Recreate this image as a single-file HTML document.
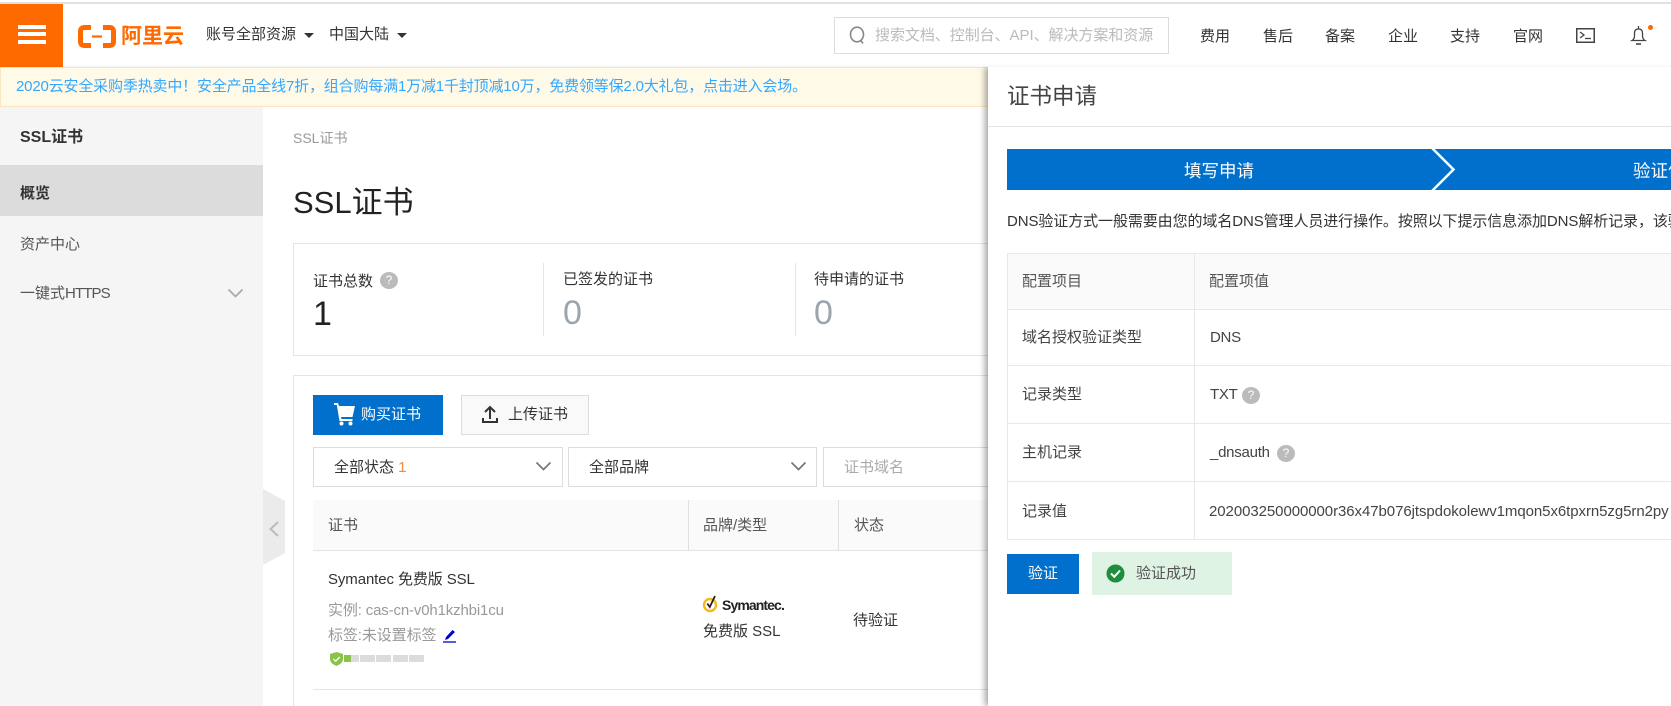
<!DOCTYPE html>
<html lang="zh-CN"><head><meta charset="utf-8"><title>SSL证书</title>
<style>
html,body{margin:0;padding:0;background:#fff;width:1671px;height:706px;overflow:hidden}
body{position:relative;font-family:"Liberation Sans","Noto Sans CJK SC",sans-serif;font-size:15px;color:#333}
.a{position:absolute;box-sizing:border-box}
.t{position:absolute;white-space:nowrap;line-height:20px;height:20px}
.help{position:absolute;width:18px;height:17px;border-radius:50%;background:#bbb;color:#fff;font-size:12px;line-height:17px;text-align:center}
svg{position:absolute;overflow:visible}
</style></head><body>

<!-- top bar -->
<div class="a" style="left:0;top:2px;width:1671px;height:2px;background:#e0e0e8"></div>
<div class="a" style="left:0;top:4px;width:63px;height:63px;background:#ff6a00"></div>
<div class="a" style="left:18px;top:25px;width:28px;height:4px;background:#fff"></div>
<div class="a" style="left:18px;top:32px;width:28px;height:4px;background:#fff"></div>
<div class="a" style="left:18px;top:40px;width:28px;height:4px;background:#fff"></div>
<svg style="left:78px;top:25px" width="38" height="23" viewBox="0 0 38 23" fill="none" stroke="#ff6a00"><path d="M13 2.5H6.5Q2.5 2.5 2.5 6.5V16.5Q2.5 20.5 6.5 20.5H13" stroke-width="5"/><path d="M25 2.5H31.5Q35.5 2.5 35.5 6.5V16.5Q35.5 20.5 31.5 20.5H25" stroke-width="5"/><path d="M14 11.5H24" stroke-width="2.2"/></svg>
<div class="t" style="left:121px;top:26px;font-size:21px;line-height:22px;height:22px;font-weight:700;color:#ff6a00;letter-spacing:0">阿里云</div>
<div class="t" style="left:206px;top:25px;color:#333">账号全部资源</div>
<svg style="left:304px;top:33px" width="10" height="5"><path d="M0 0H10L5 5Z" fill="#333"/></svg>
<div class="t" style="left:329px;top:25px;color:#333">中国大陆</div>
<svg style="left:397px;top:33px" width="10" height="5"><path d="M0 0H10L5 5Z" fill="#333"/></svg>
<div class="a" style="left:834px;top:17px;width:335px;height:37px;border:1px solid #dcdcdc"></div>
<svg style="left:849px;top:26px" width="17" height="18" viewBox="0 0 17 18" fill="none" stroke="#888" stroke-width="1.6"><ellipse cx="8" cy="8.5" rx="6.5" ry="7.3"/><path d="M11.5 14L14 17.5"/></svg>
<div class="t" style="left:875px;top:26px;color:#bbb;letter-spacing:-.05px">搜索文档、控制台、API、解决方案和资源</div>
<div class="t" style="left:1200px;top:27px">费用</div>
<div class="t" style="left:1263px;top:27px">售后</div>
<div class="t" style="left:1325px;top:27px">备案</div>
<div class="t" style="left:1388px;top:27px">企业</div>
<div class="t" style="left:1450px;top:27px">支持</div>
<div class="t" style="left:1513px;top:27px">官网</div>
<svg style="left:1576px;top:28px" width="19" height="15" viewBox="0 0 19 15" fill="none" stroke="#444"><rect x=".75" y=".75" width="17.5" height="13.5" stroke-width="1.5"/><path d="M4 4L8 7L4 10" stroke-width="1.3"/><path d="M9 10.5H15" stroke-width="1.3"/></svg>
<svg style="left:1631px;top:26px" width="15" height="19" viewBox="0 0 15 19" fill="none" stroke="#444" stroke-width="1.3"><path d="M7.5 0V3"/><path d="M1 14.5Q3.5 13 3.5 10V7Q3.5 3 7.5 3Q11.5 3 11.5 7V10Q11.5 13 14 14.5Z"/><path d="M5 18H10" stroke-width="1.6"/></svg>
<div class="a" style="left:1648px;top:24.5px;width:5px;height:5px;border-radius:50%;background:#ff6a00"></div>

<!-- notice -->
<div class="a" style="left:0;top:67px;width:1000px;height:40px;background:#fff9e8;border:1px solid #f7e6c0;line-height:38px;padding-left:15px;color:#33a8ff;white-space:nowrap;overflow:hidden;letter-spacing:-.17px">2020云安全采购季热卖中！安全产品全线7折，组合购每满1万减1千封顶减10万，免费领等保2.0大礼包，点击进入会场。</div>

<!-- sidebar -->
<div class="a" style="left:0;top:107px;width:263px;height:599px;background:#f5f5f5"></div>
<div class="a" style="left:0;top:165px;width:263px;height:51px;background:#dcdcdc"></div>
<div class="t" style="left:20px;top:128px;font-weight:700;color:#333;font-size:16px">SSL证书</div>
<div class="t" style="left:20px;top:184px;font-weight:700;color:#333">概览</div>
<div class="t" style="left:20px;top:235px;color:#555">资产中心</div>
<div class="t" style="left:20px;top:284px;color:#555">一键式<span style="letter-spacing:-.9px">HTTPS</span></div>
<svg style="left:228px;top:289px" width="15" height="9" fill="none" stroke="#aaa" stroke-width="1.8"><path d="M.5 .5L7.5 7.5L14.5 .5"/></svg>

<!-- collapse -->
<svg style="left:263px;top:489px" width="22" height="76"><path d="M0 0L22 12V64L0 76Z" fill="#ebebeb"/><path d="M15 33L7.5 40L15 47" fill="none" stroke="#bbb" stroke-width="2"/></svg>

<!-- main -->
<div class="t" style="left:293px;top:128px;color:#999;font-size:14px">SSL证书</div>
<div class="t" style="left:293px;top:183px;font-size:31px;line-height:40px;height:40px;color:#222">SSL证书</div>

<div class="a" style="left:293px;top:243px;width:720px;height:113px;border:1px solid #e5e5e5"></div>
<div class="t" style="left:313px;top:272px">证书总数</div>
<div class="help" style="left:380px;top:272px">?</div>
<div class="t" style="left:313px;top:294px;font-size:34px;line-height:40px;height:40px;color:#222">1</div>
<div class="a" style="left:543px;top:263px;width:1px;height:73px;background:#e5e5e5"></div>
<div class="t" style="left:563px;top:270px">已签发的证书</div>
<div class="t" style="left:563px;top:293px;font-size:34px;line-height:40px;height:40px;color:#9aa5ae">0</div>
<div class="a" style="left:795px;top:263px;width:1px;height:73px;background:#e5e5e5"></div>
<div class="t" style="left:814px;top:270px">待申请的证书</div>
<div class="t" style="left:814px;top:293px;font-size:34px;line-height:40px;height:40px;color:#9aa5ae">0</div>

<div class="a" style="left:293px;top:375px;width:720px;height:331px;border:1px solid #e5e5e5;border-bottom:none"></div>
<div class="a" style="left:313px;top:395px;width:130px;height:40px;background:#0070cc"></div>
<svg style="left:334px;top:402px" width="21" height="24" viewBox="0 0 21 24" fill="#fff"><path d="M0 1H4L5 4H21L18.5 15H7L7.5 17H18.5V19H5.5L2.8 3H0Z"/><circle cx="7.5" cy="21.5" r="2"/><circle cx="16.5" cy="21.5" r="2"/></svg>
<div class="t" style="left:361px;top:405px;color:#fff">购买证书</div>
<div class="a" style="left:461px;top:395px;width:128px;height:40px;background:#f9f9f9;border:1px solid #ddd"></div>
<svg style="left:482px;top:405px" width="16" height="18" viewBox="0 0 16 18" fill="none" stroke="#333" stroke-width="2"><path d="M8 14V2M3 7L8 2L13 7"/><path d="M1 13V17H15V13"/></svg>
<div class="t" style="left:508px;top:405px">上传证书</div>

<div class="a" style="left:313px;top:447px;width:250px;height:40px;border:1px solid #ddd"></div>
<div class="t" style="left:334px;top:458px">全部状态 <span style="color:#f08a3c">1</span></div>
<svg style="left:536px;top:462px" width="15" height="9" fill="none" stroke="#777" stroke-width="1.7"><path d="M.5 .5L7.5 7.5L14.5 .5"/></svg>
<div class="a" style="left:568px;top:447px;width:249px;height:40px;border:1px solid #ddd"></div>
<div class="t" style="left:589px;top:458px">全部品牌</div>
<svg style="left:791px;top:462px" width="15" height="9" fill="none" stroke="#777" stroke-width="1.7"><path d="M.5 .5L7.5 7.5L14.5 .5"/></svg>
<div class="a" style="left:823px;top:447px;width:190px;height:40px;border:1px solid #ddd"></div>
<div class="t" style="left:844px;top:458px;color:#aaa">证书域名</div>

<div class="a" style="left:313px;top:500px;width:700px;height:51px;background:#fafafa;border-bottom:1px solid #e5e5e5"></div>
<div class="a" style="left:688px;top:500px;width:1px;height:51px;background:#e0e0e0"></div>
<div class="a" style="left:838px;top:500px;width:1px;height:51px;background:#e0e0e0"></div>
<div class="t" style="left:328px;top:516px;color:#555">证书</div>
<div class="t" style="left:703px;top:516px;color:#555">品牌/类型</div>
<div class="t" style="left:854px;top:516px;color:#555">状态</div>

<div class="t" style="left:328px;top:570px;letter-spacing:-.1px">Symantec 免费版 SSL</div>
<div class="t" style="left:328px;top:601px;color:#999;letter-spacing:-.15px">实例: cas-cn-v0h1kzhbi1cu</div>
<div class="t" style="left:328px;top:626px;color:#999;letter-spacing:-.1px">标签:未设置标签</div>
<svg style="left:443px;top:630px" width="14" height="13" viewBox="0 0 14 13"><path d="M9.5 0L12 2L5 9L2 10L3 7Z" fill="#00c"/><path d="M0 12H13" stroke="#00c" stroke-width="1.3"/></svg>
<svg style="left:330px;top:652px" width="13" height="14" viewBox="0 0 13 14"><path d="M6.5 0L13 2V7Q13 11.5 6.5 14Q0 11.5 0 7V2Z" fill="#8bc34a"/><path d="M3.5 7L5.7 9.2L9.7 5" fill="none" stroke="#fff" stroke-width="1.3"/></svg>
<div class="a" style="left:344px;top:655px;width:7px;height:7px;background:#8bc34a"></div>
<div class="a" style="left:351px;top:655px;width:8px;height:7px;background:#dcdcdc"></div>
<div class="a" style="left:360px;top:655px;width:15px;height:7px;background:#dcdcdc"></div>
<div class="a" style="left:376px;top:655px;width:15px;height:7px;background:#dcdcdc"></div>
<div class="a" style="left:393px;top:655px;width:15px;height:7px;background:#dcdcdc"></div>
<div class="a" style="left:409px;top:655px;width:15px;height:7px;background:#dcdcdc"></div>

<svg style="left:703px;top:594px" width="18" height="19" viewBox="0 0 18 19" fill="none"><circle cx="7" cy="11" r="6" stroke="#f5b91e" stroke-width="2.4"/><path d="M4.3 9.5L6.8 13L12 2" stroke="#222" stroke-width="1.8"/></svg>
<div class="t" style="left:722px;top:595px;font-weight:700;font-size:14px;letter-spacing:-.9px;color:#222">Symantec.</div>
<div class="t" style="left:703px;top:622px">免费版 SSL</div>
<div class="t" style="left:853px;top:611px">待验证</div>
<div class="a" style="left:313px;top:689px;width:700px;height:1px;background:#e5e5e5"></div>

<!-- panel -->
<div class="a" style="left:988px;top:67px;width:683px;height:639px;background:#fff;box-shadow:-3px 0 6px rgba(0,0,0,.35);clip-path:inset(0 0 0 -12px)"></div>
<div class="a" style="left:0;top:64px;width:1671px;height:3px;background:linear-gradient(rgba(0,0,0,0),rgba(0,0,0,.04))"></div>
<div class="t" style="left:1007px;top:82px;font-size:22.5px;line-height:30px;height:30px;color:#444">证书申请</div>
<div class="a" style="left:988px;top:126px;width:683px;height:1px;background:#e3e3e3"></div>
<div class="a" style="left:1007px;top:149px;width:664px;height:41px;background:#0070cc;overflow:hidden">
<svg style="left:424px;top:0" width="26" height="41" fill="none"><path d="M1 -1L22.5 20.5L1 42" stroke="#fff" stroke-width="2.5"/></svg>
<div class="t" style="left:177px;top:12px;color:#fff;font-size:17.5px">填写申请</div>
<div class="t" style="left:626px;top:12px;color:#fff;font-size:17.5px">验证信息</div>
</div>
<div class="a" style="left:1007px;top:212px;width:664px;height:20px;line-height:20px;white-space:nowrap;overflow:hidden;letter-spacing:-.09px">DNS验证方式一般需要由您的域名DNS管理人员进行操作。按照以下提示信息添加DNS解析记录，该验证信息</div>

<div class="a" style="left:1007px;top:253px;width:664px;height:57px;background:#fafafa"></div>
<div class="a" style="left:1007px;top:253px;width:664px;height:1px;background:#e8e8e8"></div>
<div class="a" style="left:1007px;top:309px;width:664px;height:1px;background:#e8e8e8"></div>
<div class="a" style="left:1007px;top:365px;width:664px;height:1px;background:#e8e8e8"></div>
<div class="a" style="left:1007px;top:423px;width:664px;height:1px;background:#e8e8e8"></div>
<div class="a" style="left:1007px;top:481px;width:664px;height:1px;background:#e8e8e8"></div>
<div class="a" style="left:1007px;top:539px;width:664px;height:1px;background:#e8e8e8"></div>
<div class="a" style="left:1007px;top:253px;width:1px;height:287px;background:#e8e8e8"></div>
<div class="a" style="left:1194px;top:253px;width:1px;height:287px;background:#e8e8e8"></div>
<div class="t" style="left:1022px;top:272px;color:#555">配置项目</div>
<div class="t" style="left:1209px;top:272px;color:#555">配置项值</div>
<div class="t" style="left:1022px;top:328px;color:#444">域名授权验证类型</div>
<div class="t" style="left:1210px;top:328px;color:#444;letter-spacing:-.3px">DNS</div>
<div class="t" style="left:1022px;top:385px;color:#444">记录类型</div>
<div class="t" style="left:1210px;top:385px;color:#444;letter-spacing:-.3px">TXT</div>
<div class="help" style="left:1242px;top:387px">?</div>
<div class="t" style="left:1022px;top:443px;color:#444">主机记录</div>
<div class="t" style="left:1210px;top:443px;color:#444;letter-spacing:-.25px">_dnsauth</div>
<div class="help" style="left:1277px;top:445px">?</div>
<div class="t" style="left:1022px;top:502px;color:#444">记录值</div>
<div class="a" style="left:1209px;top:502px;width:462px;height:20px;line-height:20px;white-space:nowrap;overflow:hidden;color:#444;letter-spacing:-.07px">202003250000000r36x47b076jtspdokolewv1mqon5x6tpxrn5zg5rn2py</div>

<div class="a" style="left:1007px;top:554px;width:72px;height:40px;background:#0070cc"></div>
<div class="t" style="left:1028px;top:564px;color:#fff">验证</div>
<div class="a" style="left:1092px;top:552px;width:140px;height:43px;background:#dff3e5"></div>
<svg style="left:1106px;top:564px" width="19" height="19" viewBox="0 0 19 19"><circle cx="9.5" cy="9.5" r="9" fill="#1e8e3e"/><path d="M5 9.5L8.3 12.8L14 6.5" fill="none" stroke="#fff" stroke-width="2"/></svg>
<div class="t" style="left:1136px;top:564px;color:#555">验证成功</div>

</body></html>
